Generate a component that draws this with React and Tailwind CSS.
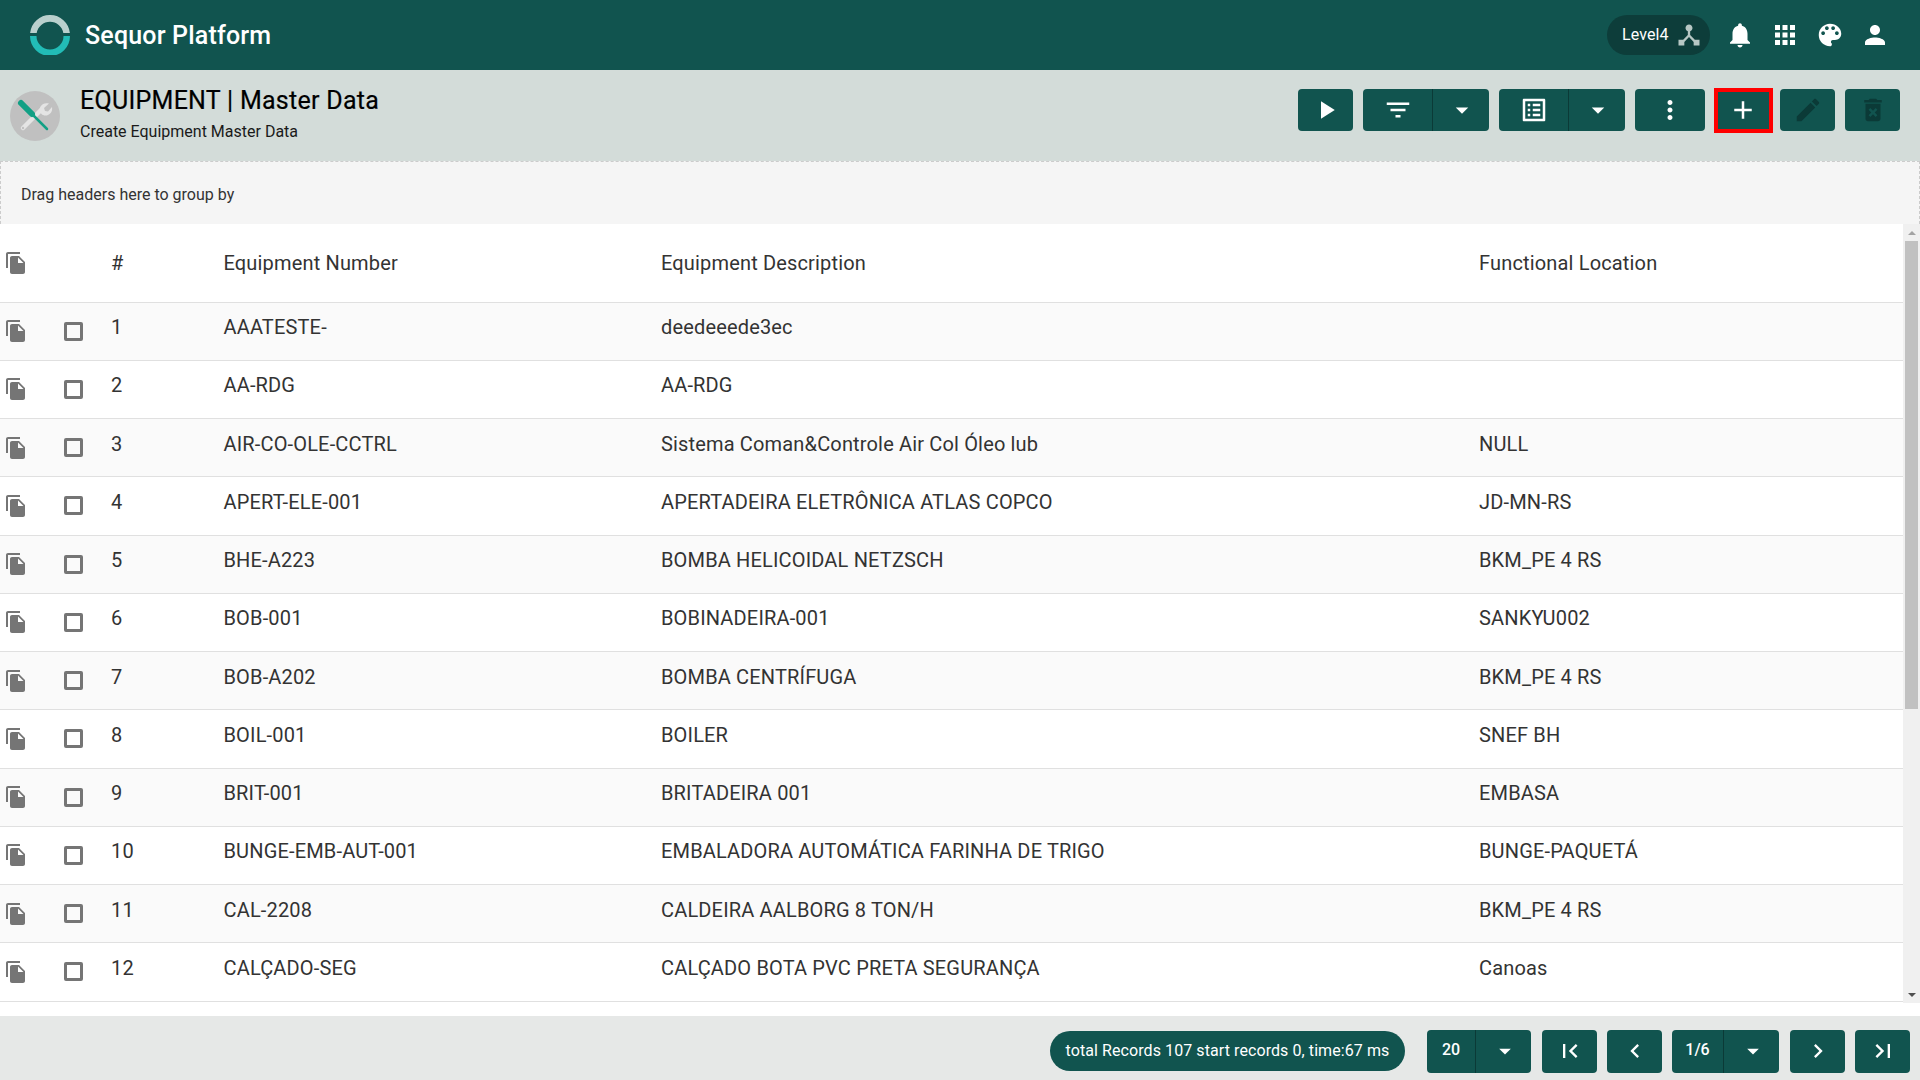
import React from 'react';

const rows = [
  ['AAATESTE-', 'deedeeede3ec', ''],
  ['AA-RDG', 'AA-RDG', ''],
  ['AIR-CO-OLE-CCTRL', 'Sistema Coman&Controle Air Col Óleo lub', 'NULL'],
  ['APERT-ELE-001', 'APERTADEIRA ELETRÔNICA ATLAS COPCO', 'JD-MN-RS'],
  ['BHE-A223', 'BOMBA HELICOIDAL NETZSCH', 'BKM_PE 4 RS'],
  ['BOB-001', 'BOBINADEIRA-001', 'SANKYU002'],
  ['BOB-A202', 'BOMBA CENTRÍFUGA', 'BKM_PE 4 RS'],
  ['BOIL-001', 'BOILER', 'SNEF BH'],
  ['BRIT-001', 'BRITADEIRA 001', 'EMBASA'],
  ['BUNGE-EMB-AUT-001', 'EMBALADORA AUTOMÁTICA FARINHA DE TRIGO', 'BUNGE-PAQUETÁ'],
  ['CAL-2208', 'CALDEIRA AALBORG 8 TON/H', 'BKM_PE 4 RS'],
  ['CALÇADO-SEG', 'CALÇADO BOTA PVC PRETA SEGURANÇA', 'Canoas'],
];

const paths = {
  play: 'M8 5v14l11-7z',
  filter: 'M10 18h4v-2h-4v2zM3 6v2h18V6H3zm3 7h12v-2H6v2z',
  drop: 'M7 10l5 5 5-5z',
  list: 'M19 5v14H5V5h14m1.1-2H3.9c-.5 0-.9.4-.9.9v16.2c0 .4.4.9.9.9h16.2c.4 0 .9-.5.9-.9V3.9c0-.5-.5-.9-.9-.9zM11 7h6v2h-6V7zm0 4h6v2h-6v-2zm0 4h6v2h-6zM7 7h2v2H7zm0 4h2v2H7zm0 4h2v2H7z',
  more: 'M12 8c1.1 0 2-.9 2-2s-.9-2-2-2-2 .9-2 2 .9 2 2 2zm0 2c-1.1 0-2 .9-2 2s.9 2 2 2 2-.9 2-2-.9-2-2-2zm0 6c-1.1 0-2 .9-2 2s.9 2 2 2 2-.9 2-2-.9-2-2-2z',
  add: 'M19 13h-6v6h-2v-6H5v-2h6V5h2v6h6v2z',
  edit: 'M3 17.25V21h3.75L17.81 9.94l-3.75-3.75L3 17.25zM20.71 7.04c.39-.39.39-1.02 0-1.41l-2.34-2.34c-.39-.39-1.02-.39-1.41 0l-1.83 1.83 3.75 3.75 1.83-1.83z',
  trash: 'M6 19c0 1.1.9 2 2 2h8c1.1 0 2-.9 2-2V7H6v12zm2.46-7.12l1.41-1.41L12 12.59l2.12-2.12 1.41 1.41L13.41 14l2.12 2.12-1.41 1.41L12 15.41l-2.12 2.12-1.41-1.41L10.59 14l-2.13-2.12zM15.5 4l-1-1h-5l-1 1H5v2h14V4z',
  bell: 'M12 22c1.1 0 2-.9 2-2h-4c0 1.1.89 2 2 2zm6-6v-5c0-3.07-1.64-5.64-4.5-6.32V4c0-.83-.67-1.5-1.5-1.5s-1.5.67-1.5 1.5v.68C7.63 5.36 6 7.92 6 11v5l-2 2v1h16v-1l-2-2z',
  apps: 'M4 8h4V4H4v4zm6 12h4v-4h-4v4zm-6 0h4v-4H4v4zm0-6h4v-4H4v4zm6 0h4v-4h-4v4zm6-10v4h4V4h-4zm-6 4h4V4h-4v4zm6 6h4v-4h-4v4zm0 6h4v-4h-4v4z',
  palette: 'M12 3c-4.97 0-9 4.03-9 9s4.03 9 9 9c.83 0 1.5-.67 1.5-1.5 0-.39-.15-.74-.39-1.01-.23-.26-.38-.61-.38-.99 0-.83.67-1.5 1.5-1.5H16c2.76 0 5-2.24 5-5 0-4.42-4.03-8-9-8zm-5.5 9c-.83 0-1.5-.67-1.5-1.5S5.67 9 6.5 9 8 9.67 8 10.5 7.33 12 6.5 12zm3-4C8.67 8 8 7.33 8 6.5S8.67 5 9.5 5s1.5.67 1.5 1.5S10.33 8 9.5 8zm5 0c-.83 0-1.5-.67-1.5-1.5S13.67 5 14.5 5s1.5.67 1.5 1.5S15.33 8 14.5 8zm3 4c-.83 0-1.5-.67-1.5-1.5S16.67 9 17.5 9s1.5.67 1.5 1.5-.67 1.5-1.5 1.5z',
  person: 'M12 12c2.21 0 4-1.79 4-4s-1.79-4-4-4-4 1.79-4 4 1.79 4 4 4zm0 2c-2.67 0-8 1.08-8 4v2h16v-2c0-2.92-5.33-4-8-4z',
  hub: 'M17 16l-4-4V8.82C14.16 8.4 15 7.3 15 6c0-1.66-1.34-3-3-3S9 4.34 9 6c0 1.3.84 2.4 2 2.82V12l-4 4H3v5h5v-3.05l4-4.2 4 4.2V21h5v-5h-4z',
  copy: 'M16 1H4c-1.1 0-2 .9-2 2v14h2V3h12V1zm-1 4l6 6v10c0 1.1-.9 2-2 2H7.99C6.89 23 6 22.1 6 21l.01-14c0-1.1.89-2 1.99-2h7zm-1 7h5.5L14 6.5V12z',
  first: 'M18.41 16.59L13.82 12l4.59-4.59L17 6l-6 6 6 6zM6 6h2v12H6z',
  prev: 'M15.41 7.41L14 6l-6 6 6 6 1.41-1.41L10.83 12z',
  next: 'M10 6L8.59 7.41 13.17 12l-4.58 4.59L10 18l6-6z',
  last: 'M5.59 7.41L10.18 12l-4.59 4.59L7 18l6-6-6-6zM16 6h2v12h-2z',
};

const Icon = ({ name, className = 'w-[30px] h-[30px] fill-white' }) => (
  <svg viewBox="0 0 24 24" className={className}>
    <path d={paths[name]} />
  </svg>
);

const ToolButton = ({ name, width = 'w-[55px]', dim }) => (
  <button className={`${width} h-[42px] rounded-[4px] bg-[#11544f] flex items-center justify-center`}>
    <Icon name={name} className={dim ? 'w-[30px] h-[30px] fill-[#0b3a37]' : 'w-[30px] h-[30px] fill-white'} />
  </button>
);

const SplitButton = ({ name }) => (
  <div className="w-[126px] h-[42px] rounded-[4px] bg-[#11544f] flex">
    <div className="w-[70px] flex items-center justify-center border-r border-[#0b3a37]">
      <Icon name={name} />
    </div>
    <div className="flex-1 flex items-center justify-center pl-[2px]">
      <Icon name="drop" />
    </div>
  </div>
);

const PageButton = ({ name }) => (
  <button className="w-[55px] h-[43px] rounded-[4px] bg-[#11544f] flex items-center justify-center">
    <Icon name={name} className="w-[28px] h-[28px] fill-white" />
  </button>
);

const PageSelect = ({ label, width, left }) => (
  <div className={`${width} h-[43px] mr-[1px] rounded-[4px] bg-[#11544f] flex text-white text-[16px] font-medium`}>
    <div className={`${left} flex items-center justify-center pb-[3px] border-r border-[#0b3a37]`}>{label}</div>
    <div className="flex-1 flex items-center justify-center pl-[2px]">
      <Icon name="drop" className="w-[28px] h-[28px] fill-white" />
    </div>
  </div>
);

const Logo = () => (
  <svg viewBox="0 0 40 40" className="w-10 h-10">
    <path d="M0.1 18A20 20 0 0 1 39.9 18L33.3 18A13.5 13.5 0 0 0 6.7 18Z" fill="#b9d0cd" />
    <path d="M0 21A20 20 0 0 0 40 21L33.5 21A13.5 13.5 0 0 1 6.5 21Z" fill="#22bcb6" />
  </svg>
);

const ToolsBadge = () => (
  <svg viewBox="0 0 50 50" className="w-[50px] h-[50px] shrink-0">
    <circle cx="25" cy="25" r="25" fill="#c0c0c0" />
    <path d="M13 37L31 19" stroke="#e4e4e4" strokeWidth="4.5" strokeLinecap="round" />
    <path d="M39 12.5l-5 4.5 1 3 3 .5 4-4.5c.6 3.5-.6 6.5-4 8-2.5 1-5 .5-6.5-1-2-2-2.5-5-1-7.5 1.8-3 5-4 8.500-3z" fill="#e4e4e4" />
    <circle cx="13" cy="37" r="1.2" fill="#c0c0c0" />
    <path d="M11 12L22 23" stroke="#12a085" strokeWidth="6" strokeLinecap="round" />
    <path d="M22 23L37 38" stroke="#12a085" strokeWidth="2.500" strokeLinecap="round" />
  </svg>
);

const columns = 'grid grid-cols-[55px_56px_112px_438px_818px_1fr] items-center';

const App = () => {
  return (
    <div className="w-full h-screen overflow-hidden flex flex-col bg-white font-['Roboto',sans-serif] text-[#333333]">
      {/* Top bar */}
      <header className="h-[70px] shrink-0 bg-[#11544f] flex items-center pl-[30px] pr-[30px]">
        <Logo />
        <span className="ml-[15px] pt-[2px] text-[25px] tracking-[0.18px] font-medium text-white">Sequor Platform</span>
        <div className="ml-auto flex items-center">
          <div className="w-[103px] h-10 rounded-full bg-[#0d3d3a] flex items-center pl-[15px] text-white text-[16px] tracking-[0.1px]">
            Level4
            <Icon name="hub" className="ml-[6px] w-[28px] h-[28px] fill-[#b7c7c4]" />
          </div>
          <div className="ml-[15px] flex gap-[15px]">
            <Icon name="bell" />
            <Icon name="apps" />
            <Icon name="palette" />
            <Icon name="person" />
          </div>
        </div>
      </header>

      {/* Title and actions */}
      <div className="h-[91px] shrink-0 bg-[#d3dcd9] flex items-center pl-[10px] pr-5">
        <ToolsBadge />
        <div className="ml-[20px] -mt-[3px]">
          <h1 className="text-[25px] leading-[30px] font-normal tracking-[0.27px] text-black [-webkit-text-stroke:0.2px_black]">EQUIPMENT | Master Data</h1>
          <p className="mt-[6px] text-[16px] leading-[20px] text-[#1a1a1a]">Create Equipment Master Data</p>
        </div>
        <div className="ml-auto flex items-center gap-[10px] pb-[11px]">
          <ToolButton name="play" />
          <SplitButton name="filter" />
          <SplitButton name="list" />
          <ToolButton name="more" width="w-[70px]" />
          <button className="w-[59px] h-[45px] -ml-[1px] -mr-[3px] border-[4px] border-[#ff0000] bg-[#11544f] flex items-center justify-center">
            <Icon name="add" className="w-[30px] h-[30px] -ml-[1px] fill-white" />
          </button>
          <ToolButton name="edit" dim />
          <ToolButton name="trash" dim />
        </div>
      </div>

      {/* Group by */}
      <div className="h-[63px] shrink-0 bg-[#f5f5f5] border border-b-0 border-dashed border-[#cccccc] flex items-center pl-[20px] pt-[3px] text-[16px] text-[#333333]">
        Drag headers here to group by
      </div>

      {/* Grid */}
      <div className="flex-1 flex min-h-0">
        <div className="flex-1 min-w-0">
          <div className={`${columns} h-[78.5px] border-b border-[#e0e0e0] text-[20px] tracking-[0.16px]`}>
            <Icon name="copy" className="ml-[4px] w-6 h-6 fill-[#757575]" />
            <div />
            <div>#</div>
            <div className="pl-[0.5px]">Equipment Number</div>
            <div>Equipment Description</div>
            <div>Functional Location</div>
          </div>
          {rows.map((row, i) => (
            <div
              key={row[0]}
              className={`${columns} h-[58.25px] border-b border-[#e0e0e0] text-[20px] tracking-[0.16px] ${i % 2 === 0 ? 'bg-[#fafafa]' : 'bg-white'}`}
            >
              <Icon name="copy" className="ml-[4px] w-6 h-6 fill-[#757575]" />
              <div className="pl-[9px]">
                <div className="w-[19px] h-[19px] border-[3px] border-[#757575] rounded-[2px]" />
              </div>
              <div className="pb-2">{i + 1}</div>
              <div className="pb-2 pl-[0.5px]">{row[0]}</div>
              <div className="pb-2">{row[1]}</div>
              <div className="pb-2">{row[2]}</div>
            </div>
          ))}
        </div>

        {/* Scrollbar */}
        <div className="w-[17px] h-[779px] shrink-0 bg-[#f0f0f0] flex flex-col items-center">
          <div className="h-[17px] flex items-center justify-center">
            <div className="w-0 h-0 border-x-[4px] border-x-transparent border-b-[4px] border-b-[#a3a3a3]" />
          </div>
          <div className="w-[13px] h-[468px] bg-[#c1c1c1]" />
          <div className="mt-auto h-[17px] flex items-center justify-center">
            <div className="w-0 h-0 border-x-[4px] border-x-transparent border-t-[4px] border-t-[#505050]" />
          </div>
        </div>
      </div>

      {/* Pager */}
      <footer className="h-[64px] shrink-0 bg-[#e6e8e7] flex items-center justify-end pr-[10px] pt-[6px]">
        <div className="w-[355px] h-10 rounded-full bg-[#11544f] flex items-center justify-center text-white text-[16px] tracking-[0.08px] mr-[22px]">
          total Records 107 start records 0, time:67 ms
        </div>
        <div className="flex gap-[10px]">
          <PageSelect label="20" width="w-[104px]" left="w-[49px]" />
          <PageButton name="first" />
          <PageButton name="prev" />
          <PageSelect label="1/6" width="w-[107px]" left="w-[52px]" />
          <PageButton name="next" />
          <PageButton name="last" />
        </div>
      </footer>
    </div>
  );
};

export default App;
